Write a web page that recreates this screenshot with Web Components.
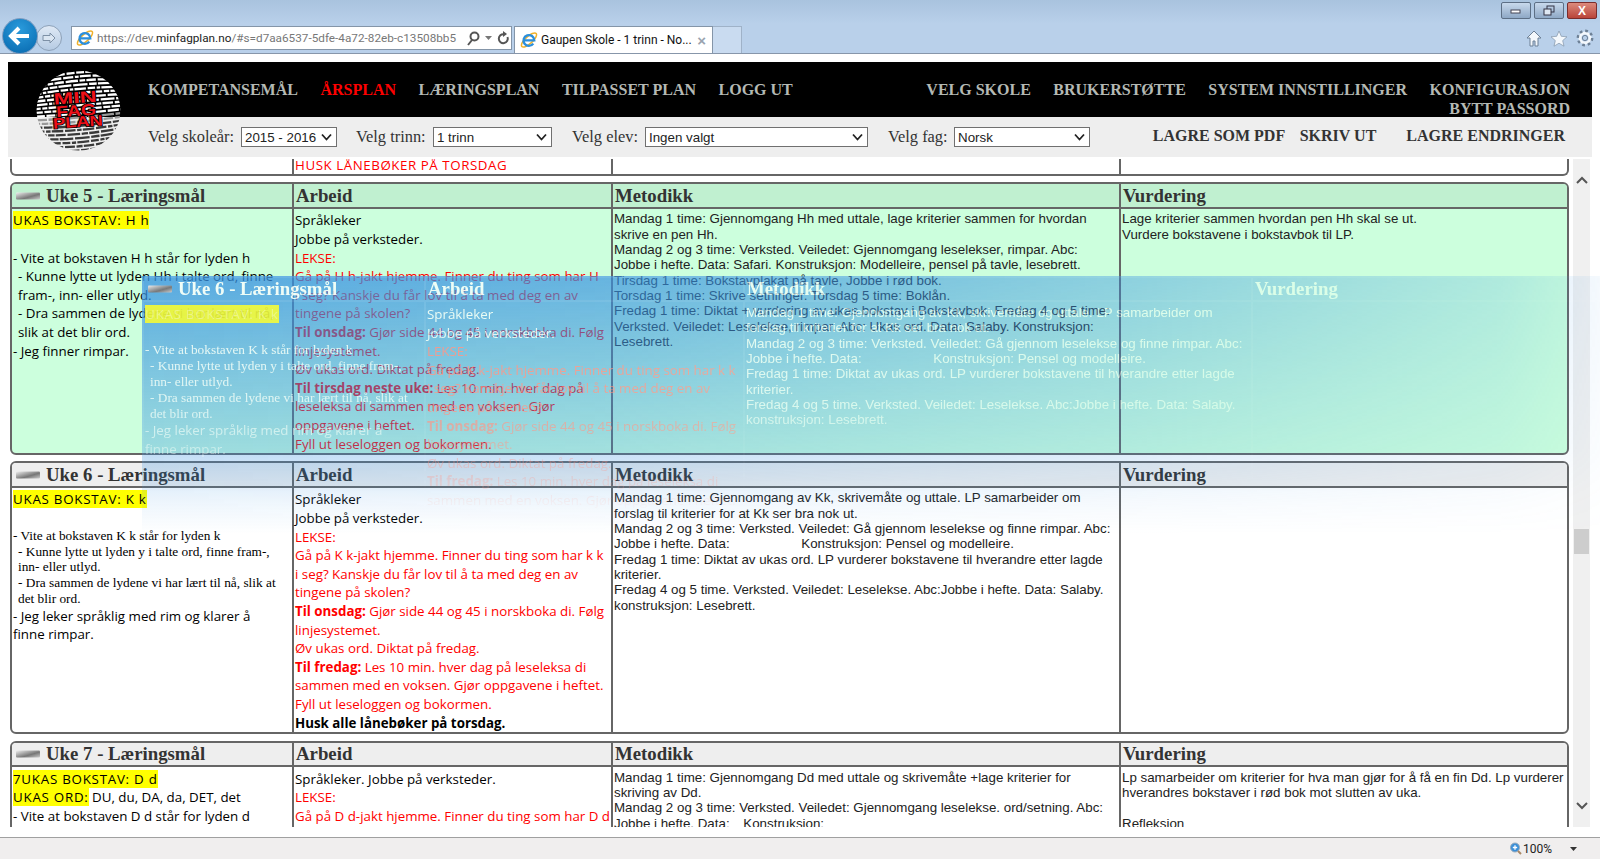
<!DOCTYPE html>
<html lang="nb">
<head>
<meta charset="utf-8">
<title>Gaupen Skole - 1 trinn - Norsk</title>
<style>
    html, body { margin: 0; padding: 0; background: #fff; }
    body { width: 1600px; height: 859px; overflow: hidden; position: relative; font-family: "Liberation Sans", sans-serif; }
    /* slotted cell content */
    .c { display: block; font-family: "Open Sans", sans-serif; font-size: 13.33px; line-height: 18.6px; white-space: nowrap; color: var(--ink, #000); }
    .t { display: block; font-family: "Liberation Serif", serif; font-size: 13.33px; line-height: 15.85px; white-space: nowrap; color: var(--ink, #000); }
    .a { display: block; font-family: "Liberation Sans", sans-serif; font-size: 13.33px; line-height: 15.33px; white-space: nowrap; color: var(--ink, #222); }
    .r { color: var(--red, #f00); }
    .y { background: var(--mark, #ff0); color: var(--mark-ink, #000); letter-spacing: .75px; }
    .i { padding-left: 5px; }
    .sp { display: inline-block; width: 68px; }
    .sp2 { display: inline-block; width: 10px; }
    .caps { letter-spacing: .55px; margin-top: -3px; }
</style>
</head>
<body>

<template id="uke6-goal">
    <span class="c"><span class="y">UKAS BOKSTAV: K k</span><br><br></span>
    <span class="t">- Vite at bokstaven K k står for lyden k</span>
    <span class="t i">- Kunne lytte ut lyden y i talte ord, finne fram-,</span>
    <span class="t i">inn- eller utlyd.</span>
    <span class="t i">- Dra sammen de lydene vi har lært til nå, slik at</span>
    <span class="t i">det blir ord.</span>
    <span class="c">- Jeg leker språklig med rim og klarer å<br>finne rimpar.</span>
</template>
<template id="uke6-work">
    <span class="c">Språkleker<br>Jobbe på verksteder.</span>
    <span class="c r">LEKSE:<br>Gå på K k-jakt hjemme. Finner du ting som har k k<br>i seg? Kanskje du får lov til å ta med deg en av<br>tingene på skolen?<br><b>Til onsdag:</b> Gjør side 44 og 45 i norskboka di. Følg<br>linjesystemet.<br>Øv ukas ord. Diktat på fredag.<br><b>Til fredag:</b> Les 10 min. hver dag på leseleksa di<br>sammen med en voksen. Gjør oppgavene i heftet.<br>Fyll ut leseloggen og bokormen.</span>
    <span class="c"><b>Husk alle lånebøker på torsdag.</b></span>
</template>
<template id="uke6-method">
    <span class="a">Mandag 1 time: Gjennomgang av Kk, skrivemåte og uttale. LP samarbeider om<br>forslag til kriterier for at Kk ser bra nok ut.<br>Mandag 2 og 3 time: Verksted. Veiledet: Gå gjennom leselekse og finne rimpar. Abc:<br>Jobbe i hefte. Data: <i class="sp"></i>Konstruksjon: Pensel og modelleire.<br>Fredag 1 time: Diktat av ukas ord. LP vurderer bokstavene til hverandre etter lagde<br>kriterier.<br>Fredag 4 og 5 time. Verksted. Veiledet: Leselekse. Abc:Jobbe i hefte. Data: Salaby.<br>konstruksjon: Lesebrett.</span>
</template>

<ie-chrome></ie-chrome>
<plan-nav></plan-nav>
<plan-tools></plan-tools>

<plan-scroll>
    <week-row tail>
        <span slot="work" class="c r caps">HUSK LÅNEBØKER PÅ TORSDAG</span>
    </week-row>

    <week-row week="Uke 5 - Læringsmål" tone="green">
        <div slot="goal">
            <span class="c"><span class="y">UKAS BOKSTAV: H h</span><br><br>- Vite at bokstaven H h står for lyden h</span>
            <span class="c i">- Kunne lytte ut lyden Hh i talte ord, finne<br>fram-, inn- eller utlyd.<br>- Dra sammen de lydene vi har lært til nå,<br>slik at det blir ord.</span>
            <span class="c">- Jeg finner rimpar.</span>
        </div>
        <div slot="work">
            <span class="c">Språkleker<br>Jobbe på verksteder.</span>
            <span class="c r">LEKSE:<br>Gå på H h-jakt hjemme. Finner du ting som har H<br>i seg? Kanskje du får lov til å ta med deg en av<br>tingene på skolen?<br><b>Til onsdag:</b> Gjør side 44 og 45 i norskboka di. Følg<br>linjesystemet.<br>Øv ukas ord. Diktat på fredag.<br><b>Til tirsdag neste uke:</b> Les 10 min. hver dag på<br>leseleksa di sammen med en voksen. Gjør<br>oppgavene i heftet.<br>Fyll ut leseloggen og bokormen.</span>
        </div>
        <div slot="method">
            <span class="a">Mandag 1 time: Gjennomgang Hh med uttale, lage kriterier sammen for hvordan<br>skrive en pen Hh.<br>Mandag 2 og 3 time: Verksted. Veiledet: Gjennomgang leselekser, rimpar. Abc:<br>Jobbe i hefte. Data: Safari. Konstruksjon: Modelleire, pensel på tavle, lesebrett.<br>Tirsdag 1 time: Bokstavplakat på tavle, Jobbe i rød bok.<br>Torsdag 1 time: Skrive setninger. Torsdag 5 time: Boklån.<br>Fredag 1 time: Diktat + vurdering av ukas bokstav i Bokstavbok. Fredag 4 og 5 time:<br>Verksted. Veiledet: Leselekse, rimpar. Abc: Ukas ord. Data: Salaby. Konstruksjon:<br>Lesebrett.</span>
        </div>
        <div slot="assess">
            <span class="a">Lage kriterier sammen hvordan pen Hh skal se ut.<br>Vurdere bokstavene i bokstavbok til LP.</span>
        </div>
    </week-row>

    <week-row week="Uke 6 - Læringsmål" from="uke6"></week-row>

    <week-row week="Uke 7 - Læringsmål">
        <div slot="goal">
            <span class="c"><span class="y">7UKAS BOKSTAV: D d</span><br><span class="y">UKAS ORD:</span> DU, du, DA, da, DET, det<br>- Vite at bokstaven D d står for lyden d</span>
        </div>
        <div slot="work">
            <span class="c">Språkleker. Jobbe på verksteder.</span>
            <span class="c r">LEKSE:<br>Gå på D d-jakt hjemme. Finner du ting som har D d</span>
        </div>
        <div slot="method">
            <span class="a">Mandag 1 time: Gjennomgang Dd med uttale og skrivemåte +lage kriterier for<br>skriving av Dd.<br>Mandag 2 og 3 time: Verksted. Veiledet: Gjennomgang leselekse. ord/setning. Abc:<br>Jobbe i hefte. Data: <i class="sp2"></i>Konstruksjon:</span>
        </div>
        <div slot="assess">
            <span class="a">Lp samarbeider om kriterier for hva man gjør for å få en fin Dd. Lp vurderer<br>hverandres bokstaver i rød bok mot slutten av uka.<br><br>Refleksjon</span>
        </div>
    </week-row>
</plan-scroll>

<ie-status></ie-status>

<!-- half faded copy of week 6, lies over the page -->
<drag-ghost>
    <week-row week="Uke 6 - Læringsmål" from="uke6" ghost></week-row>
</drag-ghost>

<script>
    const eIcon = `<svg width="18" height="18" viewBox="0 0 18 18" style="flex:none"><ellipse cx="9" cy="9" rx="9.6" ry="3.6" transform="rotate(-42 9 9)" fill="none" stroke="#f0b12a" stroke-width="1.5"/><path d="M3.6 9.4H14.300A5.400 5.400 0 1 0 13.300 12.600" fill="none" stroke="#2b8fdc" stroke-width="2.300"/></svg>`;

    class IeChrome extends HTMLElement {
        constructor() {
            super();
            this.attachShadow({ mode: 'open' });
            this.shadowRoot.innerHTML = `
                <style>
                    :host { display: block; height: 53px; border-bottom: 1px solid #8796aa; background: linear-gradient(#a9c3de, #b9d0ea 45%, #b9d0ea); }
                    .wrap { display: flex; flex-direction: column; height: 53px; }
                    .win { display: flex; justify-content: flex-end; gap: 3px; padding: 2px 3px 0 0; height: 24px; box-sizing: border-box; }
                    .win span { width: 30px; height: 17px; border: 1px solid #5d6f85; border-radius: 2px; box-sizing: border-box; background: linear-gradient(#c8d9ec, #8ea8c6); display: flex; align-items: center; justify-content: center; }
                    .win span.x { background: linear-gradient(#dc8a7c, #b9443a); border-color: #7a2c2c; color: #fff; font: bold 12px "Liberation Sans", sans-serif; }
                    .bar { display: flex; align-items: flex-end; height: 29px; position: relative; }
                    .nav { display: flex; align-items: center; width: 70px; flex: none; height: 29px; }
                    .back { width: 36px; height: 36px; border-radius: 50%; margin: -6px 0 0 2px; background: radial-gradient(circle at 50% 30%, #2a9bdc, #0667ad); border: 1px solid #7e9cc0; box-sizing: border-box; display: flex; align-items: center; justify-content: center; flex: none; position: relative; z-index: 1; }
                    .fwd { width: 26px; height: 26px; border-radius: 50%; margin: -2px 0 0 -2px; background: linear-gradient(#dfe9f5, #b6cbe3); border: 1px solid #8da1b8; box-sizing: border-box; display: flex; align-items: center; justify-content: center; flex: none; }
                    .addr { width: 441px; height: 24px; margin: 0 2px 3px 1px; background: #fff; border: 1px solid #8495a8; box-sizing: border-box; display: flex; align-items: center; padding-left: 4px; gap: 3px; flex: none; }
                    .url { font: 11.750px "Roboto", sans-serif; color: #777; width: 363px; overflow: hidden; white-space: nowrap; flex: none; }
                    .url b { font-weight: 400; color: #222; }
                    .tools { display: flex; align-items: center; gap: 5px; margin-left: 3px; }
                    .tab { width: 199px; height: 27px; background: #fff; border: 1px solid #8495a8; border-bottom: 0; box-sizing: border-box; display: flex; align-items: center; padding: 0 6px 0 5px; gap: 3px; flex: none; font: 12px "Roboto", sans-serif; color: #111; }
                    .tab span { flex: 1; white-space: nowrap; }
                    .tab em { font: bold 15px "Liberation Sans", sans-serif; color: #9aa4b0; }
                    .new { width: 29px; height: 27px; background: #c9dbf0; border: 1px solid #9fb2c8; border-left: 0; border-bottom: 0; box-sizing: border-box; flex: none; }
                    .right { margin-left: auto; display: flex; gap: 8px; padding: 0 6px 6px 0; align-items: center; }
                </style>
                <div class="wrap">
                    <div class="win">
                        <span><svg width="12" height="6"><rect x="1" y="2" width="9" height="3" fill="#fff" stroke="#445"/></svg></span>
                        <span><svg width="12" height="11"><rect x="4" y="1" width="7" height="6" fill="none" stroke="#334"/><rect x="1" y="4" width="7" height="6" fill="#dfe8f3" stroke="#334"/></svg></span>
                        <span class="x">X</span>
                    </div>
                    <div class="bar">
                        <div class="nav">
                            <div class="back"><svg width="24" height="22" viewBox="0 0 24 22"><path d="M11 3 3 11l8 8M3 11h18" fill="none" stroke="#fff" stroke-width="4"/></svg></div>
                            <div class="fwd"><svg width="16" height="14" viewBox="0 0 16 14"><path d="M9 2l5 5-5 5V9.500H2v-5h7z" fill="#dbe6f2" stroke="#7d90a6"/></svg></div>
                        </div>
                        <div class="addr">
                            ${eIcon}
                            <div class="url">https://dev.<b>minfagplan.no</b>/#s=d7aa6537-5dfe-4a72-82eb-c13508bb5</div>
                            <div class="tools">
                                <svg width="14" height="15" viewBox="0 0 14 15"><circle cx="8.500" cy="5.500" r="4" fill="none" stroke="#555" stroke-width="2"/><path d="M6 9l-4 5" stroke="#555" stroke-width="2"/></svg>
                                <svg width="7" height="4"><path d="M0 0h7L3.500 4z" fill="#777"/></svg>
                                <svg width="13" height="15" viewBox="0 0 13 15"><path d="M10.500 6A4.500 4.500 0 1 1 7 3.200" fill="none" stroke="#555" stroke-width="2"/><path d="M6 0v6l4-3z" fill="#555"/></svg>
                            </div>
                        </div>
                        <div class="tab">${eIcon}<span>Gaupen Skole - 1 trinn - No...</span><em>×</em></div>
                        <div class="new"></div>
                        <div class="right">
                            <svg width="16" height="17" viewBox="0 0 16 17"><path d="M8 1 1 8h3v8h3v-5h2v5h3V8h3z" fill="#f4f8fc" stroke="#6d8096"/></svg>
                            <svg width="18" height="17" viewBox="0 0 18 17"><path d="m9 1 2.300 5.300 5.700.5-4.300 3.800 1.300 5.600L9 13.200 4 16.200l1.300-5.600L1 6.800l5.700-.5z" fill="#f4f8fc" stroke="#8193a8" stroke-width=".7"/></svg>
                            <svg width="18" height="18" viewBox="0 0 18 18"><circle cx="9" cy="9" r="5" fill="none" stroke="#f4f8fc" stroke-width="3"/><circle cx="9" cy="9" r="7.200" fill="none" stroke="#6d8096" stroke-width="2.400" stroke-dasharray="2.800 2.850"/><circle cx="9" cy="9" r="2.600" fill="none" stroke="#6d8096"/></svg>
                        </div>
                    </div>
                </div>`;
        }
    }

    class PlanNav extends HTMLElement {
        constructor() {
            super();
            this.attachShadow({ mode: 'open' });
            // globe made of word like dashes that follow the latitudes, red name on top
            const rows = [];
            for (let y = 3; y < 80; y += 3.7) {
                const top = y < 47;
                const bend = (y - 41) * 0.22;
                const dash = `${6 + (y * 3) % 9} 1.600 ${3 + (y * 7) % 6} 1.200 ${9 + (y * 5) % 5} 1.800`;
                rows.push(`<path d="M-2 ${y + 3} Q 42 ${y + bend} 90 ${y - 5}" fill="none" stroke="${top ? '#fff' : (y < 52 ? '#999' : '#3a3a3a')}" stroke-width="2.300" stroke-dasharray="${dash}"/>`);
            }
            this.shadowRoot.innerHTML = `
                <style>
                    :host { display: block; margin: 8px 8px 0; height: 55px; background: #000; box-sizing: border-box; position: relative; font: bold 16px "Liberation Serif", serif; color: #b4b9b4; }
                    .row { display: flex; justify-content: space-between; padding: 18px 22px 0 140px; }
                    .group { display: flex; gap: 22.500px; white-space: nowrap; }
                    .cur { color: #f00; }
                    .bytt { text-align: right; padding-right: 22px; margin-top: 0; line-height: 19px; }
                    .logo { position: absolute; left: 28px; top: 8px; z-index: 2; }
                    .lines { line-height: 19px; }
                    text { paint-order: stroke; }
                </style>
                <svg class="logo" width="86" height="81" viewBox="0 0 86 81">
                    <defs><clipPath id="g"><ellipse cx="42.500" cy="40.500" rx="42" ry="40"/></clipPath></defs>
                    <g clip-path="url(#g)">${rows.join('')}</g>
                    <g font-family="Liberation Sans, sans-serif" font-weight="700" fill="#ee1018" stroke="#000" stroke-width="1.600" transform="rotate(-4 41 41)">
                        <text x="40" y="33" text-anchor="middle" font-size="16" textLength="43" lengthAdjust="spacingAndGlyphs">MIN</text>
                        <text x="40" y="46" text-anchor="middle" font-size="16" textLength="40" lengthAdjust="spacingAndGlyphs">FAG</text>
                        <text x="41" y="57" text-anchor="middle" font-size="15" textLength="50" lengthAdjust="spacingAndGlyphs">PLAN</text>
                    </g>
                </svg>
                <div class="row lines">
                    <div class="group"><span>KOMPETANSEMÅL</span><span class="cur">ÅRSPLAN</span><span>LÆRINGSPLAN</span><span>TILPASSET PLAN</span><span>LOGG UT</span></div>
                    <div class="group"><span>VELG SKOLE</span><span>BRUKERSTØTTE</span><span>SYSTEM INNSTILLINGER</span><span>KONFIGURASJON</span></div>
                </div>
                <div class="bytt">BYTT PASSORD</div>`;
        }
    }

    class PickBox extends HTMLElement {
        constructor() {
            super();
            this.attachShadow({ mode: 'open' });
            this.shadowRoot.innerHTML = `
                <style>
                    :host { display: flex; align-items: center; box-sizing: border-box; height: 20px; background: #fff; border: 1px solid #707070; padding: 0 4px 0 3px; font: 13.330px "Liberation Sans", sans-serif; color: #222; justify-content: space-between; flex: none; }
                </style>
                <slot></slot>
                <svg width="11" height="8" viewBox="0 0 11 8"><path d="M1 1.500l4.500 5 4.500-5" fill="none" stroke="#222" stroke-width="1.800"/></svg>`;
        }
    }

    class PlanTools extends HTMLElement {
        constructor() {
            super();
            this.attachShadow({ mode: 'open' });
            this.shadowRoot.innerHTML = `
                <style>
                    :host { display: flex; align-items: center; margin: 0 8px; height: 40px; background: #eee; padding: 0 27px 0 140px; box-sizing: border-box; font: 16.400px "Liberation Serif", serif; color: #333; white-space: nowrap; }
                    label { flex: none; }
                    pick-box { margin-right: 20px; }
                    .save { margin-left: auto; display: flex; font: bold 16px "Liberation Serif", serif; color: #333; margin-top: -3px; }
                    .save span:nth-child(2) { margin-left: 14.500px; }
                    .save span:last-child { margin-left: 30px; }
                </style>
                <label style="width:93px">Velg skoleår:</label><pick-box style="width:96px;margin-right:19px">2015 - 2016</pick-box>
                <label style="width:77px">Velg trinn:</label><pick-box style="width:119px">1 trinn</pick-box>
                <label style="width:73px">Velg elev:</label><pick-box style="width:223px">Ingen valgt</pick-box>
                <label style="width:66px">Velg fag:</label><pick-box style="width:136px">Norsk</pick-box>
                <div class="save"><span>LAGRE SOM PDF</span><span>SKRIV UT</span><span>LAGRE ENDRINGER</span></div>`;
        }
    }

    class WeekRow extends HTMLElement {
        connectedCallback() {
            if (this.shadowRoot) return;
            this.attachShadow({ mode: 'open' });
            const tail = this.hasAttribute('tail');
            const green = this.getAttribute('tone') === 'green';
            const week = this.getAttribute('week') || '';
            this.shadowRoot.innerHTML = `
                <style>
                    :host { display: block; flex: none; width: 1559px; box-sizing: border-box; border: 2px solid var(--line, #666); border-radius: 6px; overflow: hidden; background: var(--body, ${green ? '#ccffdd' : '#fff'}); color: var(--ink, #000); }
                    :host([tail]) { border-top: 0; border-radius: 0 0 6px 6px; height: 17px; }
                    .grid { display: grid; grid-template-columns: 282px 319px 508px 1fr; }
                    .h { height: 22.300px; line-height: 22px; padding-left: 2px; border-bottom: 2px solid var(--line, #666); border-right: 2px solid var(--line, #666); background: var(--head, ${green ? '#c0f0d0' : '#eee'}); font: bold 18.800px "Liberation Serif", serif; color: var(--title, #333); display: flex; align-items: center; white-space: nowrap; overflow: hidden; }
                    .h:first-child { padding-left: 4px; }
                    .h svg { margin-right: 6px; flex: none; }
                    .b { padding: 2.700px 0 0 1px; border-right: 2px solid var(--line, #666); min-width: 0; }
                    :host([tail]) .b { padding: 0 0 0 1px; height: 18px; }
                    .h.end, .b.end { border-right: 0; }
                </style>
                <div class="grid">
                    ${tail ? '' : `
                    <div class="h"><svg width="24" height="8"><defs><linearGradient id="m" x2="1" y2="1"><stop offset="0" stop-color="#eee"/><stop offset=".6" stop-color="#777"/><stop offset="1" stop-color="#ccc"/></linearGradient></defs><rect width="24" height="7" y=".5" rx="1" fill="url(#m)"/></svg>${week}</div>
                    <div class="h">Arbeid</div>
                    <div class="h">Metodikk</div>
                    <div class="h end">Vurdering</div>`}
                    <div class="b"><slot name="goal"></slot></div>
                    <div class="b"><slot name="work"></slot></div>
                    <div class="b"><slot name="method"></slot></div>
                    <div class="b end"><slot name="assess"></slot></div>
                </div>`;
            // same week can be shown twice, content comes from one template
            const from = this.getAttribute('from');
            if (from) {
                for (const part of ['goal', 'work', 'method']) {
                    const box = document.createElement('div');
                    box.slot = part;
                    box.append(document.getElementById(`${from}-${part}`).content.cloneNode(true));
                    this.append(box);
                }
            }
        }
    }

    class PlanScroll extends HTMLElement {
        constructor() {
            super();
            this.attachShadow({ mode: 'open' });
            this.shadowRoot.innerHTML = `
                <style>
                    :host { display: flex; height: 668px; margin: 2px 8px 0 10px; overflow: hidden; }
                    .rows { display: flex; flex-direction: column; gap: 6.400px; width: 1559px; flex: none; overflow: hidden; }
                    .bar { margin-left: 4px; width: 17px; flex: none; background: #f0f0f0; display: flex; flex-direction: column; align-items: center; position: relative; padding-top: 17px; box-sizing: border-box; }
                    .thumb { position: absolute; left: 1px; top: 370px; width: 15px; height: 25px; background: #cdcdcd; }
                    .down { margin-top: auto; margin-bottom: 17px; }
                </style>
                <div class="rows"><slot></slot></div>
                <div class="bar">
                    <svg width="12" height="8" viewBox="0 0 12 8"><path d="M1 7l5-5 5 5" fill="none" stroke="#555" stroke-width="2"/></svg>
                    <div class="thumb"></div>
                    <svg class="down" width="12" height="8" viewBox="0 0 12 8"><path d="M1 1l5 5 5-5" fill="none" stroke="#555" stroke-width="2"/></svg>
                </div>`;
        }
    }

    class IeStatus extends HTMLElement {
        constructor() {
            super();
            this.attachShadow({ mode: 'open' });
            this.shadowRoot.innerHTML = `
                <style>
                    :host { display: flex; align-items: center; justify-content: flex-end; margin-top: 10px; height: 22px; box-sizing: border-box; border-top: 1px solid #a0a0a0; background: #f0eeee; font: 12px "Roboto", sans-serif; color: #222; padding-right: 23px; }
                    span { margin: 0 3px 0 1px; }
                    .arrow { margin-left: 15px; }
                </style>
                <svg width="13" height="13" viewBox="0 0 13 13"><circle cx="6" cy="5.500" r="4.500" fill="#3a8fd8" stroke="#9ab"/><path d="M3.800 5.500h4.400M6 3.300v4.400" stroke="#fff" stroke-width="1.300"/><path d="M9 9l3 3" stroke="#a86" stroke-width="2"/></svg>
                <span>100%</span>
                <svg class="arrow" width="7" height="4"><path d="M0 0h7L3.500 4z" fill="#333"/></svg>`;
        }
    }

    class DragGhost extends HTMLElement {
        constructor() {
            super();
            this.attachShadow({ mode: 'open' });
            this.shadowRoot.innerHTML = `
                <style>
                    :host {
                        position: absolute; left: 142px; top: 276px; right: 0; height: 262px; overflow: hidden; z-index: 5;
                        background: linear-gradient(to bottom, rgba(55,145,225,.78) 0, rgba(55,145,225,.32) 175px, rgba(55,145,225,.22) 195px, rgba(55,145,225,.09) 225px, rgba(55,145,225,0) 258px);
                        -webkit-mask-image: linear-gradient(to right, #000 0, rgba(0,0,0,.88) 460px, rgba(0,0,0,.55) 977px, rgba(0,0,0,.25) 1358px, rgba(0,0,0,.07) 1458px);
                        mask-image: linear-gradient(to right, #000 0, rgba(0,0,0,.88) 460px, rgba(0,0,0,.55) 977px, rgba(0,0,0,.25) 1358px, rgba(0,0,0,.07) 1458px);
                        --line: rgba(255,255,255,.08); --body: transparent; --head: transparent;
                        --ink: #f4fff8; --title: #f4fff8; --red: #ff8f82; --mark: rgba(255,255,40,.9); --mark-ink: rgba(255,255,255,.35);
                    }
                    .fade {
                        -webkit-mask-image: linear-gradient(to bottom, #000 0, rgba(0,0,0,.8) 130px, rgba(0,0,0,.45) 180px, rgba(0,0,0,0) 240px);
                        mask-image: linear-gradient(to bottom, #000 0, rgba(0,0,0,.8) 130px, rgba(0,0,0,.45) 180px, rgba(0,0,0,0) 240px);
                    }
                </style>
                <div class="fade"><slot></slot></div>`;
        }
    }

    customElements.define('ie-chrome', IeChrome);
    customElements.define('plan-nav', PlanNav);
    customElements.define('pick-box', PickBox);
    customElements.define('plan-tools', PlanTools);
    customElements.define('week-row', WeekRow);
    customElements.define('plan-scroll', PlanScroll);
    customElements.define('ie-status', IeStatus);
    customElements.define('drag-ghost', DragGhost);
</script>
</body>
</html>
